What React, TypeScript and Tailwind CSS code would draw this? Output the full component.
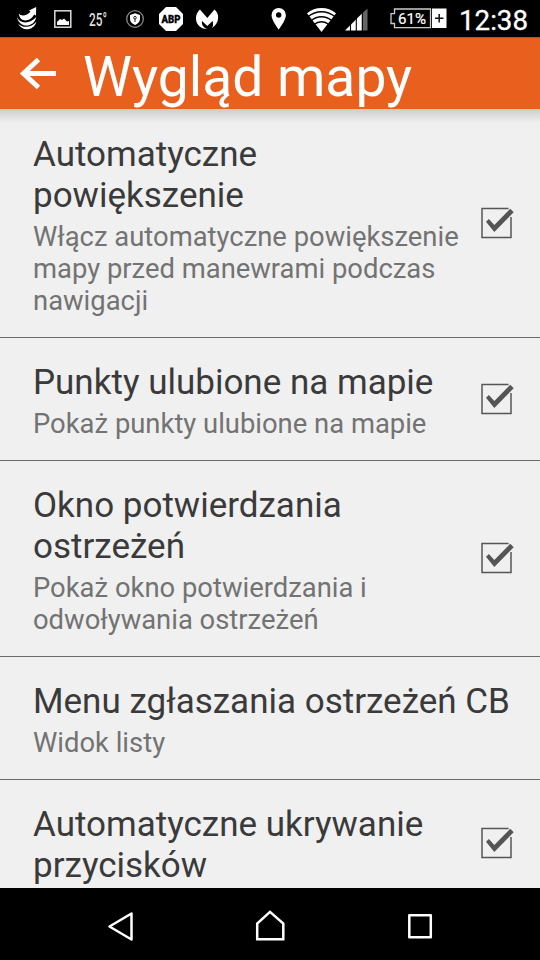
import type { ReactNode } from "react";

interface PreferenceProps {
  title: ReactNode;
  summary?: ReactNode;
  checkbox?: boolean;
}

const CheckIcon = () => (
  <svg width="34" height="34" viewBox="0 0 34 34" fill="none" className="mb-[5px] shrink-0">
    <path d="M28.600 2.500H2V31.500H31V11" stroke="#555" strokeWidth="1.5" />
    <path d="M6 15.800L8.900 12.900L14.300 18.900L30.300 2.800L33.700 6.200L14.300 26Z" fill="#555" />
  </svg>
);

const Preference = ({ title, summary, checkbox = false }: PreferenceProps) => {
  return (
    <div className="flex shrink-0 items-center justify-between border-b border-[#6c6c6c] pt-6 pr-[26px] pb-5 pl-[33px]">
      <div className="whitespace-nowrap">
        <h2 className="text-[35px] leading-[41px] text-[#3a3a3a]">{title}</h2>
        {summary && (
          <p className="pt-[5px] text-[27.4px] leading-[32px] text-[#737373]">{summary}</p>
        )}
      </div>
      {checkbox && <CheckIcon />}
    </div>
  );
};

const StatusBar = () => (
  <div className="flex h-[37px] shrink-0 items-center bg-black text-white">
    <svg width="260" height="37" viewBox="0 0 260 37" className="shrink-0">
      {/* navigation app */}
      <path d="M18.800 13.500C21 16.500 27 16 30.500 11.500L29 10.500L36.200 7L36 15.500L34.200 14.500C30 22.500 19.500 22.500 18.800 13.500Z" fill="#fff" />
      <path d="M17 16.500C19 24 30 24.500 36.300 17C34 28.500 18.500 28.500 17 16.500Z" fill="#fff" />
      <path d="M18 23.500C22.500 28.500 32 28 36.500 21.500C34 31 22 32 18 23.500Z" fill="#fff" />
      {/* gallery */}
      <rect x="54.8" y="10.8" width="16" height="16.4" fill="none" stroke="#ddd" strokeWidth="1.5" />
      <path d="M57 25V22L60 19L62 20L64 18.5L67 21.5L69 21V25Z" fill="#fff" />
      <text x="89" y="26" fill="#ddd" fontSize="18" fontWeight="500" fontFamily="Roboto, sans-serif" textLength="18" lengthAdjust="spacingAndGlyphs">25°</text>
      {/* privacy shield */}
      <circle cx="135" cy="19" r="8.3" fill="none" stroke="#888" strokeWidth="1.3" />
      <path d="M135 13.3L140 15V19C140 22 137.5 24 135 25C132.500 24 130 22 130 19V15Z" fill="#fff" />
      <circle cx="135" cy="17.7" r="1.3" fill="none" stroke="#222" />
      <path d="M135 19V22" stroke="#222" />
      {/* ad blocker */}
      <path d="M166 7H176L183 14V24L176 31H166L159 24V14Z" fill="#fff" />
      <text x="161.500" y="23" fill="#000" stroke="#000" strokeWidth="0.3" fontSize="11.500" fontWeight="900" fontFamily="Roboto, sans-serif" textLength="19" lengthAdjust="spacingAndGlyphs">ABP</text>
      {/* malware scanner */}
      <path d="M200 9.500L207.300 18L214.500 9.500C220 14 219.500 23 212 28C213.500 25.500 213.300 23.500 212.500 21L207.300 26L202 21C201.300 24 203 27.500 207 29C196 29 192.500 16 200 9.500Z" fill="#fff" />
    </svg>
    <svg width="280" height="37" viewBox="260 0 280 37" className="shrink-0">
      <path fillRule="evenodd" d="M278.700 8A7.200 7.200 0 0 1 285.900 15.200C285.900 20 278.700 29.500 278.700 29.500S271.500 20 271.500 15.200A7.200 7.200 0 0 1 278.700 8ZM278.700 12.300A2.700 2.700 0 1 0 278.700 17.700A2.700 2.700 0 1 0 278.700 12.300Z" fill="#fff" />
      <path d="M307 13.300C315 6.300 328 6.300 336 13.300L321.500 32Z" fill="#fff" />
      <g fill="none" stroke="#000" strokeWidth="1.300">
        <path d="M307.500 17Q321.500 6.500 335.500 17" />
        <path d="M310.500 21Q321.500 12.500 332.500 21" />
        <path d="M313.500 25Q321.500 18.500 329.500 25" />
      </g>
      <path d="M345 30.500L362 13.500V30.500Z" fill="#fff" />
      <path d="M362.500 13L367.500 8.500V30.500H362.500Z" fill="#666" />
      <path d="M350.500 20V31M356.300 16V31M362.300 11V31" stroke="#000" strokeWidth="1.100" />
      {/* battery */}
      <path d="M430.500 9H394.500V13.700H391V23.500H394.500V27.700H430.500Z" fill="none" stroke="#ccc" strokeWidth="1.300" />
      <rect x="432" y="8.500" width="14.500" height="19.500" fill="#fff" />
      <path d="M439.200 14V22.500M435 18.200H443.500" stroke="#111" strokeWidth="1.500" />
      <text x="398" y="24" fill="#fff" stroke="#fff" strokeWidth="0.2" fontSize="15.500" fontFamily="Roboto, sans-serif" textLength="28" lengthAdjust="spacingAndGlyphs">61%</text>
      <text x="459" y="29.500" fill="#fff" stroke="#fff" strokeWidth="0.3" fontSize="27" fontFamily="Roboto, sans-serif" textLength="69" lengthAdjust="spacingAndGlyphs">12:38</text>
    </svg>
  </div>
);

const Header = () => (
  <header className="relative z-10 flex h-[72px] shrink-0 items-center overflow-hidden border-t border-[#c9480f] bg-[#e95f1e] text-white">
    <svg width="83" height="72" viewBox="0 0 83 72" fill="none" className="shrink-0">
      <path d="M56 35.500H24M38.500 21.500L23.500 35.500L38.500 49.500" stroke="#fff" strokeWidth="5" />
    </svg>
    <h1 className="pt-[7px] text-[55.2px] leading-[66px] whitespace-nowrap">Wygląd mapy</h1>
  </header>
);

const NavigationBar = () => (
  <nav className="grid h-[72px] shrink-0 grid-cols-[45px_150px_150px_150px_45px] items-center justify-items-center bg-black pt-1">
    <span />
    <svg width="40" height="40" viewBox="0 0 40 40" fill="none" stroke="#fff" strokeWidth="2.500" strokeLinejoin="round">
      <path d="M31.500 7.500V33.500L9.500 20.500Z" />
    </svg>
    <svg width="40" height="40" viewBox="0 0 40 40" fill="none" stroke="#fff" strokeWidth="2.500">
      <path d="M7.200 33.200V17.500L20 5.900L33.300 17.500V33.200Z" />
    </svg>
    <svg width="40" height="40" viewBox="0 0 40 40" fill="none" stroke="#fff" strokeWidth="2.500" strokeLinejoin="round">
      <rect x="9.300" y="9.300" width="21.500" height="22" />
    </svg>
    <span />
  </nav>
);

const App = () => {
  return (
    <div className="flex h-[960px] w-[540px] flex-col overflow-hidden bg-[#f0f0f0] font-[Roboto,sans-serif]">
      <StatusBar />
      <Header />
      <main className="relative flex min-h-0 flex-1 flex-col overflow-hidden pt-px">
        <div className="pointer-events-none absolute inset-x-0 top-0 h-[14px] bg-linear-to-b from-black/15 to-transparent" />
        <Preference
          title={<>Automatyczne<br />powiększenie</>}
          summary={<>Włącz automatyczne powiększenie<br />mapy przed manewrami podczas<br />nawigacji</>}
          checkbox
        />
        <Preference title="Punkty ulubione na mapie" summary="Pokaż punkty ulubione na mapie" checkbox />
        <Preference
          title={<>Okno potwierdzania<br />ostrzeżeń</>}
          summary={<>Pokaż okno potwierdzania i<br />odwoływania ostrzeżeń</>}
          checkbox
        />
        <Preference title="Menu zgłaszania ostrzeżeń CB" summary="Widok listy" />
        <Preference title={<>Automatyczne ukrywanie<br />przycisków</>} checkbox />
      </main>
      <NavigationBar />
    </div>
  );
};

export default App;
